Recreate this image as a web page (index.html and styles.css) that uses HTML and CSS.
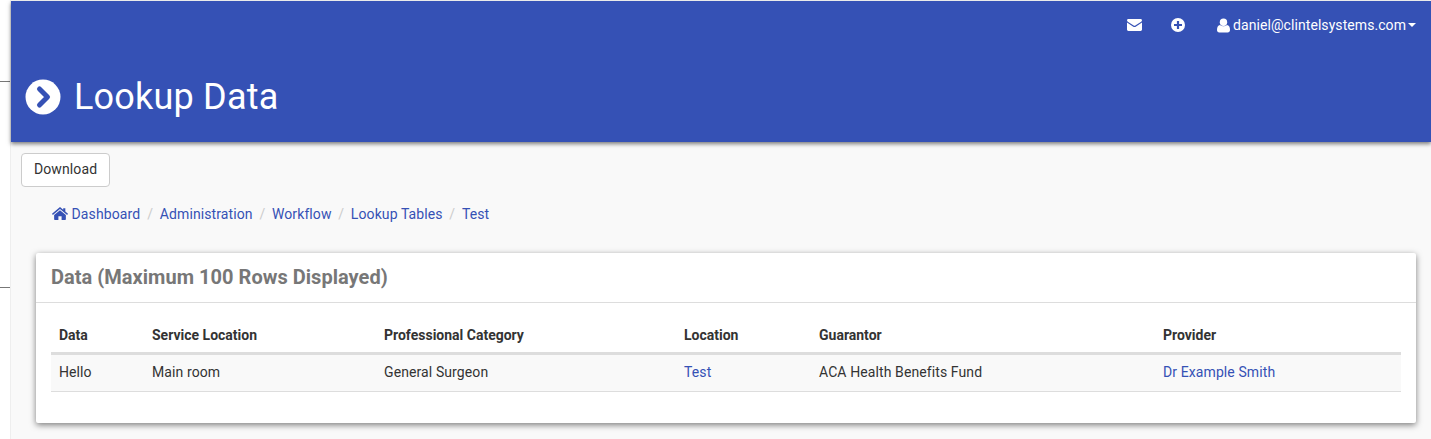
FILE: index.html
```html
<!DOCTYPE html>
<html lang="en">
  <head>
    <meta charset="UTF-8" />
    <meta name="viewport" content="width=device-width, initial-scale=1.0" />
    <title>Lookup Data</title>
    <link rel="stylesheet" href="styles.css">
  </head>

  <body>
    <div class="side">
      <div class="side-line first"></div>
      <div class="side-line second"></div>
    </div>

    <div class="main">
      <header class="header">
        <nav class="topnav">
          <a class="topnav-item mail" href="#">
            <svg class="icon" width="15" height="12" viewBox="0 0 15 12">
              <path fill="#fff" d="M1.4 0h12.2c.8 0 1.4.6 1.4 1.3 0 .6-.4 1.1-.8 1.4L8.3 6.6c-.5.3-1.1.3-1.6 0L.8 2.7C.4 2.4 0 1.9 0 1.3 0 .6.6 0 1.4 0z"/>
              <path fill="#fff" d="M0 3.6l6.3 4.1c.7.5 1.7.5 2.4 0L15 3.6v7c0 .8-.6 1.4-1.4 1.4H1.4C.6 12 0 11.4 0 10.6z"/>
            </svg>
          </a>
          <a class="topnav-item plus" href="#">
            <svg class="icon" width="14" height="14" viewBox="0 0 14 14">
              <circle cx="7" cy="7" r="7" fill="#fff"/>
              <path stroke="#3551b5" stroke-width="2.2" d="M7 3v8M3 7h8"/>
            </svg>
          </a>
          <a class="topnav-item user" href="#">
            <svg class="icon" width="13" height="15" viewBox="0 0 13 14">
              <circle cx="6.5" cy="3.700" r="3.700" fill="#fff"/>
              <path fill="#fff" d="M3 6.600c.9.8 2.100 1.200 3.500 1.200S9.100 7.400 10 6.600c2 .3 3 2 3 5 0 1.500-.9 2.400-2.300 2.400H2.300C.9 14 0 13.100 0 11.600c0-3 1-4.700 3-5z"/>
            </svg>
            <span>daniel@clintelsystems.com</span>
            <span class="caret"></span>
          </a>
        </nav>
        <h1 class="title">
          <svg class="title-icon" width="36" height="36" viewBox="0 0 36 36">
            <circle cx="18" cy="18" r="17.500" fill="#fff"/>
            <path fill="none" stroke="#3551b5" stroke-width="5" stroke-linecap="round" stroke-linejoin="round" d="M14.500 10l8 8-8 8"/>
          </svg>
          Lookup Data
        </h1>
      </header>

      <div class="content">
        <button class="btn">Download</button>

        <ol class="breadcrumb">
          <li>
            <a href="#">
              <svg class="home" width="16" height="13" viewBox="0 0 15 12">
                <path fill="#3551b5" d="M7.500 0L10.500 2.500V1h2v3.200L15 6.300l-.8 1L7.500 1.800.8 7.300 0 6.300z"/>
                <path fill="#3551b5" d="M7.500 3L13 7.500V11.300c0 .4-.3.7-.7.700H9V8.500H6V12H2.700c-.4 0-.7-.3-.7-.7V7.500z"/>
              </svg>
              Dashboard
            </a>
          </li>
          <li><a href="#">Administration</a></li>
          <li><a href="#">Workflow</a></li>
          <li><a href="#">Lookup Tables</a></li>
          <li><a href="#">Test</a></li>
        </ol>

        <div class="card">
          <h2 class="card-title">Data (Maximum 100 Rows Displayed)</h2>
          <div class="card-body">
            <table class="data">
              <colgroup>
                <col class="c1"><col class="c2"><col class="c3"><col class="c4"><col class="c5"><col>
              </colgroup>
              <thead>
                <tr>
                  <th>Data</th>
                  <th>Service Location</th>
                  <th>Professional Category</th>
                  <th>Location</th>
                  <th>Guarantor</th>
                  <th>Provider</th>
                </tr>
              </thead>
              <tbody>
                <tr>
                  <td>Hello</td>
                  <td>Main room</td>
                  <td>General Surgeon</td>
                  <td><a href="#">Test</a></td>
                  <td>ACA Health Benefits Fund</td>
                  <td><a href="#">Dr Example Smith</a></td>
                </tr>
              </tbody>
            </table>
          </div>
        </div>
      </div>
    </div>
  </body>
</html>
```

FILE: styles.css
```css
* {
  box-sizing: border-box;
}

html,
body {
  height: 100%;
}

body {
  margin: 0;
  display: flex;
  overflow: hidden;
  background: #fff;
  color: #333;
  font-family: Roboto, "Liberation Sans", sans-serif;
  font-size: 14px;
  line-height: 20px;
  letter-spacing: 0.1px;
}

a {
  color: #3551b5;
  text-decoration: none;
}

/* strip on the left of the page */
.side {
  width: 11px;
  flex: none;
  border-right: 1px solid #eee;
}

.side-line {
  width: 10px;
  height: 1px;
  background: #777;
}

.side-line.first {
  margin-top: 81px;
}

.side-line.second {
  margin-top: 205px;
}

.main {
  flex: 1;
  min-width: 0;
  background: #f9f9f9;
}

.header {
  height: 141px;
  margin-top: 1px;
  background: #3551b5;
  box-shadow: 0 2px 4px rgba(0, 0, 0, 0.5);
  color: #fff;
}

.topnav {
  display: flex;
  justify-content: flex-end;
  align-items: center;
  height: 48px;
  padding-right: 15px;
}

.topnav-item {
  display: flex;
  align-items: center;
  color: #fff;
}

.topnav-item.mail {
  margin-right: 29px;
}

.topnav-item.plus {
  margin-right: 32px;
}

.topnav-item.user {
  letter-spacing: 0.07px;
}

.topnav-item.user .icon {
  margin-right: 3px;
}

.caret {
  width: 0;
  height: 0;
  margin-left: 2px;
  border-top: 4px solid #fff;
  border-left: 4px solid transparent;
  border-right: 4px solid transparent;
}

.title {
  display: flex;
  align-items: center;
  gap: 13px;
  margin: 0;
  padding: 28px 0 0 14px;
  font-size: 36px;
  font-weight: 400;
  line-height: 40px;
  letter-spacing: 0.2px;
}

.content {
  padding: 11px 15px 0 10px;
}

.btn {
  display: block;
  height: 34px;
  padding: 0 12px 2px;
  background: #fff;
  border: 1px solid #ccc;
  border-radius: 4px;
  color: #333;
  font-family: inherit;
  font-size: 14px;
  letter-spacing: 0.1px;
}

.breadcrumb {
  display: flex;
  margin: 0;
  padding: 17px 0 0 31px;
  list-style: none;
}

.breadcrumb li + li::before {
  content: "/";
  padding: 0 6.7px;
  color: #ccc;
}

.breadcrumb li:first-child {
  margin-right: 0.4px;
}

.home {
  vertical-align: -1px;
}

.card {
  margin: 29px 0 0 15px;
  height: 170px;
  background: #fff;
  border-radius: 2px;
  box-shadow: 0 2px 6px rgba(0, 0, 0, 0.5);
}

.card-title {
  margin: 0;
  height: 50px;
  padding: 12px 15px 0;
  border-bottom: 1px solid #ddd;
  color: #777;
  font-size: 20px;
  font-weight: 700;
  line-height: 24px;
  letter-spacing: 0.03px;
}

.card-body {
  padding: 15px;
}

.data {
  width: 100%;
  table-layout: fixed;
  border-collapse: collapse;
}

.c1 {
  width: 93px;
}

.c2 {
  width: 232px;
}

.c3 {
  width: 300px;
}

.c4 {
  width: 135px;
}

.c5 {
  width: 344px;
}

.data th {
  height: 35px;
  padding: 7px 8px;
  border-bottom: 3px solid #ddd;
  text-align: left;
  font-weight: 700;
  letter-spacing: 0;
}

.data td {
  height: 37px;
  padding: 7px 8px 9px;
  background: #f9f9f9;
  border-bottom: 1px solid #ddd;
}
```
